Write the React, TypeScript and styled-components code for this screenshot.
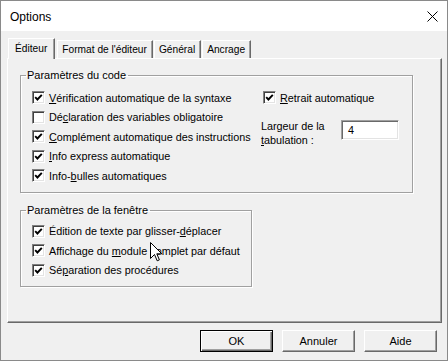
import React from "react";
import styled, { createGlobalStyle, css } from "styled-components";

const Global = createGlobalStyle`
  html, body { margin: 0; padding: 0; background: #f0f0f0; }
  * { box-sizing: border-box; }
  body { font-family: "Liberation Sans", Arial, sans-serif; font-size: 10.8px; color: #000; }
`;

const Window = styled.div`
  position: relative;
  width: 448px;
  height: 361px;
  border: 1px solid #8a8a8a;
  background: #f0f0f0;
  display: flex;
  flex-direction: column;
  overflow: hidden;
`;

const TitleBar = styled.div`
  height: 30px;
  flex: none;
  background: #fff;
  display: flex;
  align-items: center;
  justify-content: space-between;
  padding: 0 8px 0 9px;
`;

const Title = styled.span`
  font-size: 12px;
  font-family: "Liberation Sans", Arial, sans-serif;
  margin-top: 1px;
`;

const CloseBtn = styled.div`
  width: 12px;
  height: 12px;
  display: flex;
  align-items: center;
  justify-content: center;
  margin-right: 1px;
`;

const Body = styled.div`
  flex: 1;
  display: flex;
  flex-direction: column;
  padding: 7px 5px 0 6px;
`;

const TabStrip = styled.div`
  display: flex;
  align-items: flex-end;
  height: 20px;
  padding-left: 1px;
  position: relative;
  z-index: 1;
`;

const Tab = styled.div<{ $active?: boolean }>`
  height: 18px;
  padding: 0 5px 0 4px;
  display: flex;
  align-items: center;
  font-size: 10.2px;
  border-top: 1px solid #fff;
  border-left: 1px solid #fff;
  border-right: 1px solid #696969;
  box-shadow: inset -1px 0 #a0a0a0;
  background: #f0f0f0;
  margin-right: 1px;
  white-space: nowrap;
  ${(p) =>
    p.$active &&
    css`
      height: 21px;
      margin-bottom: -1px;
      padding: 0 7px 2px 6px;
      margin-right: 2px;
    `}
`;

const Panel = styled.div`
  width: 435px;
  height: 265px;
  border-top: 1px solid #fff;
  border-left: 1px solid #fff;
  border-right: 1px solid #696969;
  border-bottom: 1px solid #696969;
  box-shadow: inset -1px -1px #a0a0a0;
  padding: 10px 0 0 12px;
  display: flex;
  flex-direction: column;
  gap: 11px;
`;

const Group = styled.fieldset<{ $width: number }>`
  width: ${(p) => p.$width}px;
  margin: 0;
  padding: 0;
  border: 1px solid #a0a0a0;
  box-shadow: 1px 1px #fff, inset 1px 1px #fff;
  min-inline-size: 0;
`;

const Legend = styled.legend`
  margin-left: 5px;
  padding: 0 2px 0 1px;
  font-size: 11px;
  line-height: 13px;
`;

const CodeGrid = styled.div`
  display: grid;
  grid-template-columns: 229px 1fr;
  padding: 6px 0 6px 11px;
`;

const Column = styled.div`
  display: flex;
  flex-direction: column;
`;

const Row = styled.label`
  height: 19.5px;
  display: flex;
  align-items: center;
  gap: 4px;
  white-space: nowrap;
`;

const RightRow = styled(Row)`
  padding-left: 2px;
`;

const Box = styled.span`
  width: 13px;
  height: 13px;
  flex: none;
  background: #fff;
  border: 1px solid;
  border-color: #808080 #fff #fff #808080;
  box-shadow: inset 1px 1px #404040, inset -1px -1px #e3e3e3;
  display: flex;
  align-items: center;
  justify-content: center;
`;

const U = styled.span`
  text-decoration: underline;
  text-underline-offset: 1px;
`;

const TabWidth = styled.div`
  display: flex;
  align-items: flex-start;
  margin-top: 11px;
`;

const TabLabel = styled.div`
  width: 80px;
  line-height: 14px;
`;

const TextBox = styled.div`
  width: 58px;
  height: 20px;
  margin-top: 1px;
  background: #fff;
  border: 1px solid;
  border-color: #a0a0a0 #fff #fff #a0a0a0;
  box-shadow: inset 1px 1px #696969, inset -1px -1px #e3e3e3;
  padding: 0 6px;
  display: flex;
  align-items: center;
`;

const WindowList = styled.div`
  display: flex;
  flex-direction: column;
  padding: 5px 0 6px 11px;
`;

const ButtonRow = styled.div`
  display: flex;
  justify-content: flex-end;
  gap: 9px;
  padding: 7px 5px 0 0;
`;

const Button = styled.div<{ $default?: boolean }>`
  width: 73px;
  height: 22px;
  display: flex;
  align-items: center;
  justify-content: center;
  font-size: 11px;
  background: #f0f0f0;
  border: 1px solid;
  border-color: #fff #696969 #696969 #fff;
  box-shadow: inset -1px -1px #a0a0a0;
  ${(p) =>
    p.$default &&
    css`
      border: 1px solid #000;
      box-shadow: inset 1px 1px #fff, inset -1px -1px #696969, inset -2px -2px #a0a0a0;
    `}
`;

const Cursor = styled.svg`
  position: absolute;
  left: 149px;
  top: 241px;
`;

const Check = ({ on }: { on: boolean }) => (
  <Box>
    {on && (
      <svg width="9" height="9" viewBox="0 0 9 9">
        <path d="M1.2 4.2 L3.4 6.5 L7.8 1.8" fill="none" stroke="#000" strokeWidth="1.9" />
      </svg>
    )}
  </Box>
);

const CheckRow = ({ on, children }: { on: boolean; children: React.ReactNode }) => (
  <Row>
    <Check on={on} />
    <span>{children}</span>
  </Row>
);

export default function App() {
  return (
    <>
      <Global />
      <Window>
        <TitleBar>
          <Title>Options</Title>
          <CloseBtn>
            <svg width="11" height="11" viewBox="0 0 11 11">
              <path d="M0.5 0.5 L10.5 10.5 M10.5 0.5 L0.5 10.5" stroke="#000" strokeWidth="1" />
            </svg>
          </CloseBtn>
        </TitleBar>
        <Body>
          <TabStrip>
            <Tab $active>Éditeur</Tab>
            <Tab>Format de l'éditeur</Tab>
            <Tab>Général</Tab>
            <Tab>Ancrage</Tab>
          </TabStrip>
          <Panel>
            <Group $width={393}>
              <Legend>Paramètres du code</Legend>
              <CodeGrid>
                <Column>
                  <CheckRow on>
                    <U>V</U>érification automatique de la syntaxe
                  </CheckRow>
                  <CheckRow on={false}>
                    Dé<U>c</U>laration des variables obligatoire
                  </CheckRow>
                  <CheckRow on>
                    <U>C</U>omplément automatique des instructions
                  </CheckRow>
                  <CheckRow on>
                    <U>I</U>nfo express automatique
                  </CheckRow>
                  <CheckRow on>
                    Info-<U>b</U>ulles automatiques
                  </CheckRow>
                </Column>
                <Column>
                  <RightRow>
                    <Check on />
                    <span>
                      <U>R</U>etrait automatique
                    </span>
                  </RightRow>
                  <TabWidth>
                    <TabLabel>
                      Largeur de la
                      <br />
                      <U>t</U>abulation :
                    </TabLabel>
                    <TextBox>4</TextBox>
                  </TabWidth>
                </Column>
              </CodeGrid>
            </Group>
            <Group $width={232}>
              <Legend>Paramètres de la fenêtre</Legend>
              <WindowList>
                <CheckRow on>
                  Édition de texte par glisser-<U>d</U>éplacer
                </CheckRow>
                <CheckRow on>
                  Affichage du <U>m</U>odule complet par défaut
                </CheckRow>
                <CheckRow on>
                  Sé<U>p</U>aration des procédures
                </CheckRow>
              </WindowList>
            </Group>
          </Panel>
          <ButtonRow>
            <Button $default>OK</Button>
            <Button>Annuler</Button>
            <Button>Aide</Button>
          </ButtonRow>
        </Body>
        <Cursor width="13" height="21" viewBox="0 0 13 21">
          <path
            d="M0.5 0.5 L0.5 16.5 L4.5 12.5 L7.2 18.8 L9.4 17.9 L6.8 11.8 L11.8 11.8 Z"
            fill="#fff"
            stroke="#000"
            strokeWidth="1"
            strokeLinejoin="miter"
          />
        </Cursor>
      </Window>
    </>
  );
}
